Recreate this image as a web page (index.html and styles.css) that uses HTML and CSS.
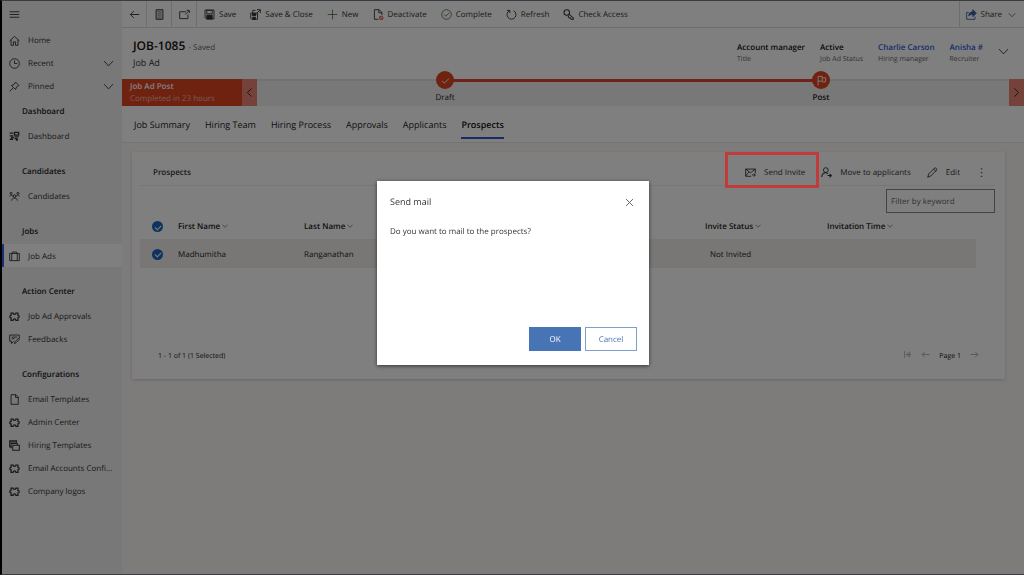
FILE: index.html
```html
<!DOCTYPE html>
<html lang="en">
<head>
<meta charset="utf-8">
<meta name="viewport" content="width=device-width, initial-scale=1">
<title>JOB-1085 - Job Ad</title>
<link rel="stylesheet" href="styles.css">
</head>
<body>
<svg class="sprite" aria-hidden="true">
  <symbol id="menu" viewBox="0 0 16 16"><path d="M1 4h14M1 8h14M1 12h14"/></symbol>
  <symbol id="home" viewBox="0 0 16 16"><path d="M1 8.500 8 2l7 6.500M3 7v8h3.500v-5h3v5H13V7"/></symbol>
  <symbol id="clock" viewBox="0 0 16 16"><circle cx="8" cy="8" r="7"/><path d="M8 3.500V8h4"/></symbol>
  <symbol id="pin" viewBox="0 0 16 16"><path d="M9.500 1.500 14.500 6.500 11 8.500 9.500 12.500 3.500 6.500 7.500 5zM6 10l-5 5"/></symbol>
  <symbol id="down" viewBox="0 0 16 16"><path d="m1.500 4.500 6.500 7 6.500-7"/></symbol>
  <symbol id="board" viewBox="0 0 16 16"><path d="M1 3h5M1 7h5M1 12h5M8 2h6v4H8zM8 8.500h6M3 9.500h4M8 11h3v3M12 11v3" stroke-width="2"/></symbol>
  <symbol id="people" viewBox="0 0 16 16"><circle cx="3" cy="3.500" r="1.500"/><circle cx="13" cy="3.500" r="1.500"/><circle cx="8" cy="7.500" r="2"/><path d="M1 8c1-3 4-2 5 0M15 8c-1-3-4-2-5 0M3.500 14c1-5 8-5 9 0"/></symbol>
  <symbol id="case" viewBox="0 0 16 16"><path d="M1 3.500h14v10.500H1zM5 3.500V1.500h6v2M4 4v10M12 4v10"/></symbol>
  <symbol id="puzzle" viewBox="0 0 16 16"><path d="M3 3h3c0 2.500 4 2.500 4 0h3v3.500c2.500 0 2.500 3.500 0 3.500v3.500h-3c0-2.500-4-2.500-4 0H3V10C.5 10 .5 6.500 3 6.500z" stroke-width="1.800"/></symbol>
  <symbol id="feedback" viewBox="0 0 16 16"><path d="M15 6V1.500H1v9h2.500V14L7 10.500M4 4.500h8M4 7h4M8 14l1-3 5-5 1.500 1.500-5 5z"/></symbol>
  <symbol id="page" viewBox="0 0 16 16"><path d="M3 1h7l3.500 3.500V15H3zM9.500 1v4h4"/></symbol>
  <symbol id="copies" viewBox="0 0 16 16"><path d="M4 10H1V1h10v3M1 3h10M3 12V5h9v2M5.500 7.500H15V15H5.500z" stroke-width="1.500"/></symbol>
  <symbol id="back" viewBox="0 0 16 16"><path d="M15 8H2M7 3 2 8l5 5"/></symbol>
  <symbol id="forward" viewBox="0 0 16 16"><path d="M1 8h13M9 3l5 5-5 5"/></symbol>
  <symbol id="first" viewBox="0 0 16 16"><path d="M3 2v12M14 8H7M10 4 6 8l4 4M12 3v10"/></symbol>
  <symbol id="form" viewBox="0 0 16 16"><path d="M3 1h10v14H3z" fill="#ccc"/><path d="M5.500 4h5M5.500 7h5M5.500 10h5M5.500 13h5" stroke-width=".5"/></symbol>
  <symbol id="popout" viewBox="0 0 16 16"><path d="M10 4H1v10h12V8M9 8l5-5M11 2h4v4"/></symbol>
  <symbol id="save" viewBox="0 0 16 16"><path d="M1.500 1.500h13v13h-11l-2-2z" /><path d="M4 2h8v5H4z"/><path d="M4 9h8v5.500H4z" fill="currentColor"/></symbol>
  <symbol id="saveclose" viewBox="0 0 16 16"><path d="M1 6h10v9H2.500L1 13.500zM4 6V2h4M10 1h5v5M15 1l-5 5"/><path d="M3.500 6.500h5v3h-5zM4 12h4v3H4z" fill="currentColor"/></symbol>
  <symbol id="plus" viewBox="0 0 16 16"><path d="M8 1v14M1 8h14"/></symbol>
  <symbol id="deact" viewBox="0 0 16 16"><path d="M8 15H2V1h7l4 4v4M8.500 1v4.500H13"/><g class="warn"><circle cx="12" cy="13" r="2.500"/><path d="m10 11 4 4"/></g></symbol>
  <symbol id="complete" viewBox="0 0 16 16"><circle cx="8" cy="8" r="7"/><path d="m4.500 8 2.500 2.500 5-5"/></symbol>
  <symbol id="refresh" viewBox="0 0 16 16"><path d="M5 2.500a6.500 6.500 0 1 0 6 0M1.500 2H5.500v4"/></symbol>
  <symbol id="key" viewBox="0 0 16 16"><path d="M8.500 7.500 15 13v2h-3l-1-2H9l-2-3.500" stroke-width="1.500"/><circle cx="5.500" cy="5" r="4" stroke-width="1.500"/></symbol>
  <symbol id="share" viewBox="0 0 16 16"><path d="M4 5H1v10h12v-4"/><path d="M4 10c0-4 3-6 6-6V1l5 5-5 5V8c-3 0-4 0-6 2z" fill="currentColor"/></symbol>
  <symbol id="mail" viewBox="0 0 16 16"><path d="M9 13.500H1V3h14v6M1 3l7 5.500L15 3M1 13l5-6M10 11.500h5M13 9.500l2 2-2 2.500"/></symbol>
  <symbol id="person" viewBox="0 0 16 16"><circle cx="7" cy="4.500" r="3.500"/><path d="M1 14.500c.5-4 3-6 6-6 1 0 2 .5 3 1M9.500 12.500H15M12.500 10l2.500 2.500-2.500 2.500" stroke-width="1.500"/></symbol>
  <symbol id="pencil" viewBox="0 0 16 16"><path d="m1 15 1.500-5L11 1.500c1.500-1 4 1.500 3 3L5.500 13zM9.500 3l3.500 3.500"/></symbol>
  <symbol id="check" viewBox="0 0 16 16"><path d="m3 8.500 3.500 3.500L13 5"/></symbol>
  <symbol id="flag" viewBox="0 0 16 16"><path d="M3 15V2h6v7H3M9 4h5v6H9"/></symbol>
  <symbol id="left" viewBox="0 0 16 16"><path d="m11 2-6 6 6 6"/></symbol>
  <symbol id="right" viewBox="0 0 16 16"><path d="m5 2 6 6-6 6"/></symbol>
  <symbol id="close" viewBox="0 0 16 16"><path d="m3 3 10 10M13 3 3 13"/></symbol>
</svg>

<div class="app">
  <nav class="sidebar" aria-label="Site map">
    <button class="menu-btn" aria-label="Menu"><svg class="icon"><use href="#menu"/></svg></button>
    <a class="nav" href="#"><svg class="icon"><use href="#home"/></svg>Home</a>
    <a class="nav" href="#"><svg class="icon"><use href="#clock"/></svg><span class="grow">Recent</span><svg class="icon"><use href="#down"/></svg></a>
    <a class="nav" href="#"><svg class="icon"><use href="#pin"/></svg><span class="grow">Pinned</span><svg class="icon"><use href="#down"/></svg></a>
    <section class="group">
      <h2>Dashboard</h2>
      <a class="nav" href="#"><svg class="icon"><use href="#board"/></svg>Dashboard</a>
    </section>
    <section class="group">
      <h2>Candidates</h2>
      <a class="nav" href="#"><svg class="icon"><use href="#people"/></svg>Candidates</a>
    </section>
    <section class="group">
      <h2>Jobs</h2>
      <a class="nav selected" href="#" aria-current="page"><svg class="icon"><use href="#case"/></svg>Job Ads</a>
    </section>
    <section class="group">
      <h2>Action Center</h2>
      <a class="nav" href="#"><svg class="icon"><use href="#puzzle"/></svg>Job Ad Approvals</a>
      <a class="nav" href="#"><svg class="icon"><use href="#feedback"/></svg>Feedbacks</a>
    </section>
    <section class="group">
      <h2>Configurations</h2>
      <a class="nav" href="#"><svg class="icon"><use href="#page"/></svg>Email Templates</a>
      <a class="nav" href="#"><svg class="icon"><use href="#puzzle"/></svg>Admin Center</a>
      <a class="nav" href="#"><svg class="icon"><use href="#copies"/></svg>Hiring Templates</a>
      <a class="nav" href="#"><svg class="icon"><use href="#puzzle"/></svg>Email Accounts Confi...</a>
      <a class="nav" href="#"><svg class="icon"><use href="#puzzle"/></svg>Company logos</a>
    </section>
  </nav>

  <main class="main">
    <div class="commands">
      <button class="tool" aria-label="Back"><svg class="icon"><use href="#back"/></svg></button>
      <button class="tool" aria-label="Form"><svg class="icon"><use href="#form"/></svg></button>
      <button class="tool" aria-label="Open in new window"><svg class="icon"><use href="#popout"/></svg></button>
      <div class="actions">
        <button class="cmd"><svg class="icon"><use href="#save"/></svg>Save</button>
        <button class="cmd"><svg class="icon"><use href="#saveclose"/></svg>Save &amp; Close</button>
        <button class="cmd"><svg class="icon green"><use href="#plus"/></svg>New</button>
        <button class="cmd"><svg class="icon"><use href="#deact"/></svg>Deactivate</button>
        <button class="cmd"><svg class="icon green"><use href="#complete"/></svg>Complete</button>
        <button class="cmd"><svg class="icon"><use href="#refresh"/></svg>Refresh</button>
        <button class="cmd"><svg class="icon"><use href="#key"/></svg>Check Access</button>
      </div>
      <button class="share"><svg class="icon blue"><use href="#share"/></svg>Share<svg class="icon small"><use href="#down"/></svg></button>
    </div>

    <header class="record">
      <div class="record-title">
        <h1>JOB-1085 <small>- Saved</small></h1>
        <p>Job Ad</p>
      </div>
      <dl class="facts">
        <div><dd>Account manager</dd><dt>Title</dt></div>
        <div><dd>Active</dd><dt>Job Ad Status</dt></div>
        <div><dd><a href="#">Charlie Carson</a></dd><dt>Hiring manager</dt></div>
        <div><dd><a href="#">Anisha #</a></dd><dt>Recruiter</dt></div>
      </dl>
      <button class="expand" aria-label="Expand header"><svg class="icon"><use href="#down"/></svg></button>
    </header>

    <section class="process" aria-label="Business process">
      <div class="process-name"><strong>Job Ad Post</strong><span>Completed in 23 hours</span></div>
      <button class="step-btn" aria-label="Previous"><svg class="icon"><use href="#left"/></svg></button>
      <ol class="stages">
        <li class="stage"><span class="dot"><svg class="icon"><use href="#check"/></svg></span>Draft</li>
        <li class="stage current"><span class="dot"><svg class="icon"><use href="#flag"/></svg></span>Post</li>
      </ol>
      <button class="step-btn" aria-label="Next"><svg class="icon"><use href="#right"/></svg></button>
    </section>

    <nav class="tabs" aria-label="Form tabs">
      <a href="#">Job Summary</a>
      <a href="#">Hiring Team</a>
      <a href="#">Hiring Process</a>
      <a href="#">Approvals</a>
      <a href="#">Applicants</a>
      <a class="active" href="#" aria-current="page">Prospects</a>
    </nav>

    <section class="card">
      <div class="card-head">
        <h2>Prospects</h2>
        <button class="cmd invite"><svg class="icon"><use href="#mail"/></svg>Send Invite</button>
        <button class="cmd"><svg class="icon"><use href="#person"/></svg>Move to applicants</button>
        <button class="cmd"><svg class="icon"><use href="#pencil"/></svg>Edit</button>
        <button class="more" aria-label="More commands">⋮</button>
      </div>
      <div class="filter"><input type="text" placeholder="Filter by keyword" aria-label="Filter by keyword"></div>
      <table class="grid">
        <colgroup><col class="c-check"><col class="c-first"><col><col class="c-status"><col class="c-time"></colgroup>
        <thead>
          <tr>
            <th><input type="checkbox" checked aria-label="Select all"></th>
            <th>First Name<svg class="icon"><use href="#down"/></svg></th>
            <th>Last Name<svg class="icon"><use href="#down"/></svg></th>
            <th>Invite Status<svg class="icon"><use href="#down"/></svg></th>
            <th>Invitation Time<svg class="icon"><use href="#down"/></svg></th>
          </tr>
        </thead>
        <tbody>
          <tr>
            <td><input type="checkbox" checked aria-label="Select Madhumitha Ranganathan"></td>
            <td>Madhumitha</td>
            <td>Ranganathan</td>
            <td class="status">Not Invited</td>
            <td></td>
          </tr>
        </tbody>
      </table>
      <footer class="pager">
        <span class="count">1 - 1 of 1 (1 Selected)</span>
        <button aria-label="First page"><svg class="icon"><use href="#first"/></svg></button>
        <button aria-label="Previous page"><svg class="icon"><use href="#back"/></svg></button>
        <span>Page 1</span>
        <button aria-label="Next page"><svg class="icon"><use href="#forward"/></svg></button>
      </footer>
    </section>
  </main>
</div>

<div class="overlay">
  <div class="dialog" role="dialog" aria-modal="true" aria-labelledby="dialog-title">
    <div class="dialog-head">
      <h2 id="dialog-title">Send mail</h2>
      <button class="close" aria-label="Close"><svg class="icon"><use href="#close"/></svg></button>
    </div>
    <p>Do you want to mail to the prospects?</p>
    <div class="dialog-actions">
      <button class="btn primary">OK</button>
      <button class="btn">Cancel</button>
    </div>
  </div>
</div>
</body>
</html>
```
FILE: styles.css
```css
* { box-sizing: border-box; }

body {
  margin: 0;
  font: 8px/13px "Open Sans", "Noto Sans", sans-serif;
  text-rendering: geometricPrecision;
  color: #333;
  background: #fdf7f7;
}

h1, h2, p, dl, dd, ol { margin: 0; padding: 0; }
button { font: inherit; color: inherit; background: none; border: 0; padding: 0; text-rendering: inherit; }
a { color: inherit; text-decoration: none; }

.sprite { position: absolute; width: 0; height: 0; }
.icon { width: 11px; height: 11px; flex: none; }
.icon, symbol { fill: none; stroke: currentColor; stroke-width: 1.3; }
.warn { stroke: #d04040; }
.green { color: #4f7a58; }
.blue { color: #3a62a0; }
.grow { flex: 1; }

.app {
  display: flex;
  min-height: 100vh;
  border: solid #777788;
  border-width: 1px 0 1px 2px;
  border-left-color: #000;
}

/* Sidebar */
.sidebar { width: 120px; flex: none; background: #f0f0f0; }
.menu-btn { display: flex; align-items: center; height: 27px; padding-left: 7px; }
.nav {
  display: flex;
  align-items: center;
  gap: 8px;
  height: 23px;
  padding: 1px 8px 0 7px;
  white-space: nowrap;
}
.nav.selected { background: #fff; border-left: 2px solid #2266e3; border-radius: 1px; padding-left: 5px; }
.group h2 { padding: 8px 0 6px 20px; font-size: 8px; font-weight: 600; line-height: 13px; color: #222; }
.group + .group { margin-top: 10px; }

/* Command bar */
.main { flex: 1; min-width: 0; }
.commands { display: flex; height: 27px; background: #fff; border-bottom: 1px solid #ddd; }
.tool { width: 25px; display: grid; place-items: center; border-right: 1px solid #ddd; }
.actions { display: flex; flex: 1; gap: 14px; padding: 1px 0 0 7px; }
.cmd { display: flex; align-items: center; gap: 4px; white-space: nowrap; }
.share { display: flex; align-items: center; gap: 4px; padding: 1px 8px 0 6px; border-left: 1px solid #ddd; }
.share .small { margin-left: 2px; }
.small { width: 8px; height: 8px; }

/* Record header */
.record { display: flex; align-items: center; height: 51px; padding: 0 15px 0 11px; background: #fff; }
.record-title { flex: 1; }
.record h1 { font-size: 12px; line-height: 16px; font-weight: 600; color: #111; }
.record small { font-size: 8px; font-weight: 400; color: #666; }
.record p { font-size: 9px; }
.facts { display: flex; gap: 15px; margin-right: 15px; }
.facts div { display: flex; flex-direction: column; }
.facts dd { font-weight: 600; color: #111; }
.facts dt { font-size: 7px; line-height: 12px; color: #666; }
.facts a { color: #2a5bd8; }

/* Process bar */
.process { display: flex; height: 27px; background: #f0f0f0; }
.process-name { width: 120px; padding: 2px 8px; line-height: 12px; display: flex; flex-direction: column; color: #fff; background: #e04522; }
.process-name strong { font-weight: 600; }
.process-name span { color: #f3b5a6; }
.step-btn { width: 15px; display: grid; place-items: center; background: #e88475; color: #222; }
.stages { flex: 1; display: flex; list-style: none; border-top: 2px solid #e2e2e2; }
.stage { flex: 1; position: relative; display: flex; flex-direction: column; align-items: center; gap: 2px; margin-top: -10px; color: #222; }
.stage.current { font-weight: 600; }
.stage.current::before {
  content: "";
  position: absolute;
  top: 8px;
  right: 50%;
  width: 100%;
  height: 3px;
  background: #e04530;
}
.dot {
  position: relative;
  z-index: 1;
  width: 18px;
  height: 18px;
  display: grid;
  place-items: center;
  border-radius: 50%;
  background: #e04522;
  color: #fff;
}

/* Tabs */
.tabs { display: flex; gap: 15px; height: 37px; padding: 0 12px; background: #fff; border-bottom: 1px solid #e8e8e8; }
.tabs a { margin-bottom: 3px; padding-top: 12px; font-size: 9px; border-bottom: 2px solid transparent; white-space: nowrap; color: #222; }
.tabs .active { font-weight: 600; color: #111; border-color: #2a5fc8; }

/* Prospects card */
.card { margin: 9px 19px 0 10px; padding: 0 10px 16px 8px; background: #fff; box-shadow: 0 1px 3px #ccc; }
.card-head { display: flex; gap: 16px; height: 34px; padding: 7px 9px 0 13px; align-items: center; border-bottom: 1px solid #eee; }
.card-head h2 { flex: 1; font-size: 8px; font-weight: 600; }
.card-head .cmd { gap: 8px; }
.invite { position: relative; }
.invite::after {
  content: "";
  position: absolute;
  z-index: 20;
  inset: -14px -14px -9px -20px;
  border: 3px solid #c23b3b;
}
.more { width: 10px; font-size: 11px; }
.filter { display: flex; justify-content: flex-end; padding-top: 3px; }
.filter input { width: 109px; height: 24px; padding: 1px 4px 0; font: inherit; text-rendering: inherit; border: 1px solid #888; background: #fff; }
.filter input::placeholder { color: #666; opacity: 1; }

.grid { width: calc(100% - 19px); table-layout: fixed; border-collapse: collapse; }
.c-check { width: 38px; }
.c-first { width: 126px; }
.c-status { width: 122px; }
.c-time { width: 149px; }
.grid th { height: 26px; padding: 1px 0 0; text-align: left; font-weight: 600; color: #222; }
.grid th .icon { width: 6px; height: 6px; margin-left: 2px; }
.grid td { height: 29px; padding: 1px 0 0; background: #f1eeec; color: #222; }
.grid td.status { padding-left: 5px; }
.grid input {
  appearance: none;
  width: 11px;
  height: 11px;
  margin: 0 0 0 12px;
  border-radius: 50%;
  background: #1a66c0;
  display: grid;
  place-items: center;
}
.grid input::before {
  content: "";
  width: 5px;
  height: 3px;
  border: solid #fff;
  border-width: 0 0 1px 1px;
  transform: rotate(-45deg);
}

.pager { display: flex; align-items: flex-end; gap: 9px; padding: 82px 16px 0 18px; font-size: 7px; color: #222; }
.pager .count { flex: 1; }
.pager button { display: flex; padding-bottom: 4px; color: #999; }
.pager .icon { width: 9px; height: 9px; }

/* Dialog */
.overlay {
  position: fixed;
  inset: 0;
  z-index: 10;
  display: grid;
  place-items: center;
  padding: 0 0 29px 2px;
  background: rgba(0, 0, 0, 0.5);
}
.dialog {
  display: flex;
  flex-direction: column;
  width: 272px;
  min-height: 184px;
  padding: 13px 12px 14px 13px;
  background: #fff;
  box-shadow: 0 1px 4px rgba(0, 0, 0, 0.6);
}
.dialog-head { display: flex; justify-content: space-between; align-items: center; }
.dialog-head h2 { font-size: 9px; line-height: 16px; font-weight: 400; }
.close { display: flex; padding-right: 2px; color: #555; }
.dialog p { padding-top: 15px; flex: 1; color: #333; }
.dialog-actions { display: flex; justify-content: flex-end; gap: 4px; }
.btn { width: 52px; height: 24px; padding-top: 1px; border: 1px solid #7d9fcb; color: #4a76b0; }
.btn.primary { background: #4674b4; border-color: #4674b4; color: #fff; }
```
